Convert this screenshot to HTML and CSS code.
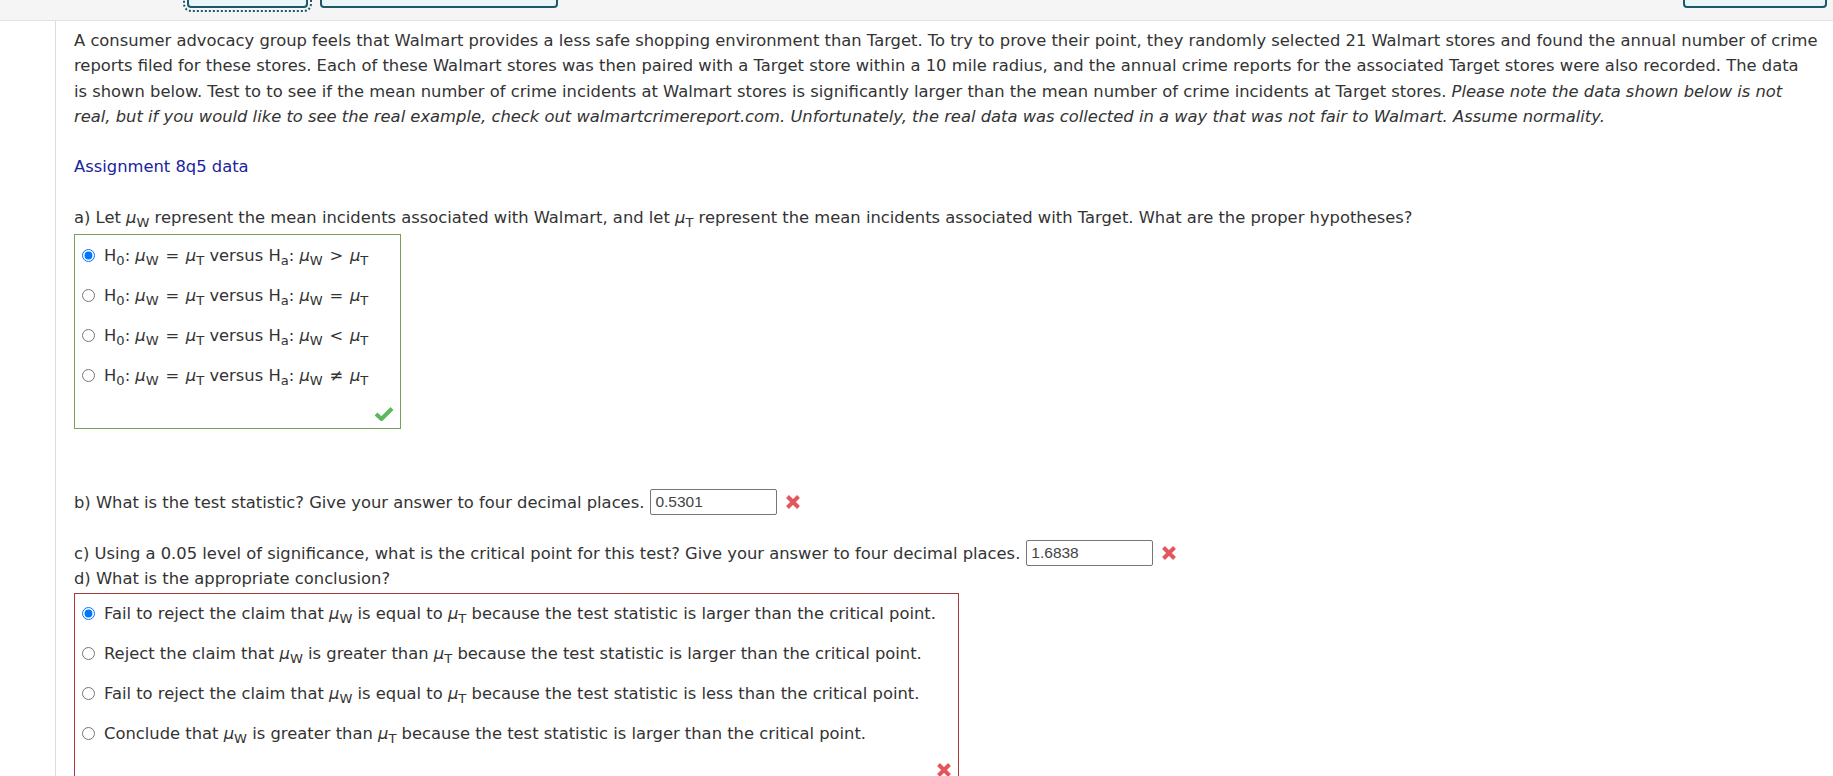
FILE: index.html
```html
<!DOCTYPE html>
<html>
<head>
    <title>Assignment 8q5</title>
    <meta charset="UTF-8">
    <meta name="viewport" content="width=device-width, initial-scale=1.0">
    <link rel="stylesheet" href="styles.css">
</head>
<body>
    <div class="topbar">
        <button class="nav-btn nav-prev" type="button" aria-label="Previous"></button>
        <button class="nav-btn nav-wide" type="button" aria-label="Jump to question"></button>
        <button class="nav-btn nav-next" type="button" aria-label="Next"></button>
    </div>

    <div class="question">
        <p class="intro">A consumer advocacy group feels that Walmart provides a less safe shopping environment than Target. To try to prove their point, they randomly selected 21 Walmart stores and found the annual number of crime reports filed for these stores. Each of these Walmart stores was then paired with a Target store within a 10 mile radius, and the annual crime reports for the associated Target stores were also recorded. The data<br>is shown below. Test to to see if the mean number of crime incidents at Walmart stores is significantly larger than the mean number of crime incidents at Target stores. <em>Please note the data shown below is not real, but if you would like to see the real example, check out walmartcrimereport.com. Unfortunately, the real data was collected in a way that was not fair to Walmart. Assume normality.</em></p>

        <p class="data-link"><a href="#">Assignment 8q5 data</a></p>

        <p class="part">a) Let <i>μ</i><sub>W</sub> represent the mean incidents associated with Walmart, and let <i>μ</i><sub>T</sub> represent the mean incidents associated with Target. What are the proper hypotheses?</p>

        <div class="choices choices-a">
            <label class="choice"><input type="radio" name="qa" checked><span>H<sub>0</sub>: <i>μ</i><sub>W</sub> <b class="op">=</b> <i>μ</i><sub>T</sub> versus H<sub>a</sub>: <i>μ</i><sub>W</sub> <b class="op">&gt;</b> <i>μ</i><sub>T</sub></span></label>
            <label class="choice"><input type="radio" name="qa"><span>H<sub>0</sub>: <i>μ</i><sub>W</sub> <b class="op">=</b> <i>μ</i><sub>T</sub> versus H<sub>a</sub>: <i>μ</i><sub>W</sub> <b class="op">=</b> <i>μ</i><sub>T</sub></span></label>
            <label class="choice"><input type="radio" name="qa"><span>H<sub>0</sub>: <i>μ</i><sub>W</sub> <b class="op">=</b> <i>μ</i><sub>T</sub> versus H<sub>a</sub>: <i>μ</i><sub>W</sub> <b class="op">&lt;</b> <i>μ</i><sub>T</sub></span></label>
            <label class="choice"><input type="radio" name="qa"><span>H<sub>0</sub>: <i>μ</i><sub>W</sub> <b class="op">=</b> <i>μ</i><sub>T</sub> versus H<sub>a</sub>: <i>μ</i><sub>W</sub> <b class="op">≠</b> <i>μ</i><sub>T</sub></span></label>
            <div class="mark">
                <svg width="20" height="15" viewBox="0 0 20 15"><path d="M2 8 L7.5 13 L18 2.5" fill="none" stroke="#5cb85c" stroke-width="4"/></svg>
            </div>
        </div>

        <div class="answer-line line-b">
            <span>b) What is the test statistic? Give your answer to four decimal places.</span>
            <input class="answer" type="text" value="0.5301">
            <svg class="wrong" width="16" height="16" viewBox="0 0 16 16"><path d="M2.5 2.5 L13.5 13.5 M13.5 2.5 L2.5 13.5" stroke="#e5565c" stroke-width="4"/></svg>
        </div>

        <div class="answer-line line-c">
            <span>c) Using a 0.05 level of significance, what is the critical point for this test? Give your answer to four decimal places.</span>
            <input class="answer" type="text" value="1.6838">
            <svg class="wrong" width="16" height="16" viewBox="0 0 16 16"><path d="M2.5 2.5 L13.5 13.5 M13.5 2.5 L2.5 13.5" stroke="#e5565c" stroke-width="4"/></svg>
        </div>
        <p class="part part-d">d) What is the appropriate conclusion?</p>

        <div class="choices choices-d">
            <label class="choice"><input type="radio" name="qd" checked><span>Fail to reject the claim that <i>μ</i><sub>W</sub> is equal to <i>μ</i><sub>T</sub> because the test statistic is larger than the critical point.</span></label>
            <label class="choice"><input type="radio" name="qd"><span>Reject the claim that <i>μ</i><sub>W</sub> is greater than <i>μ</i><sub>T</sub> because the test statistic is larger than the critical point.</span></label>
            <label class="choice"><input type="radio" name="qd"><span>Fail to reject the claim that <i>μ</i><sub>W</sub> is equal to <i>μ</i><sub>T</sub> because the test statistic is less than the critical point.</span></label>
            <label class="choice"><input type="radio" name="qd"><span>Conclude that <i>μ</i><sub>W</sub> is greater than <i>μ</i><sub>T</sub> because the test statistic is larger than the critical point.</span></label>
            <div class="mark">
                <svg width="16" height="16" viewBox="0 0 16 16"><path d="M2.5 2.5 L13.5 13.5 M13.5 2.5 L2.5 13.5" stroke="#e5565c" stroke-width="4"/></svg>
            </div>
        </div>
    </div>
</body>
</html>
```

FILE: styles.css
```css
body {
    margin: 0;
    font-family: "DejaVu Sans", Verdana, sans-serif;
    font-size: 16.35px;
    line-height: 25.3px;
    color: #333;
    background: #fff;
}
.topbar {
    box-sizing: border-box;
    height: 21px;
    overflow: hidden;
    display: flex;
    align-items: flex-end;
    padding: 0 6px 12px 187px;
    background: #f5f5f5;
    border-bottom: 1px solid #e2e2e2;
}
.nav-btn {
    height: 32px;
    flex: none;
    background: #eaf5fa;
    border: 2px solid #1d5868;
    border-radius: 4px;
}
.nav-prev {
    width: 121px;
    outline: 2px dotted #1d5868;
    outline-offset: 2px;
}
.nav-wide {
    width: 238px;
    margin-left: 12px;
}
.nav-next {
    width: 144px;
    margin-left: auto;
}
.question {
    box-sizing: border-box;
    min-height: calc(100vh - 21px);
    margin-left: 55px;
    padding: 7px 12px 0 18px;
    border-left: 1px solid #dcdcdc;
}
p {
    margin: 0;
}
.data-link,
.part {
    margin-top: 25.3px;
}
.data-link a {
    color: #1a23a0;
    text-decoration: none;
}
sub {
    font-size: 0.8em;
    line-height: 0;
    vertical-align: -0.3em;
}
.op {
    font-weight: normal;
    margin: 0 1.5px;
}
.choices {
    box-sizing: border-box;
    display: flex;
    flex-direction: column;
}
.choices-a {
    width: 327px;
    margin-top: 4px;
    border: 1px solid #79a15a;
}
.choices-d {
    width: 885px;
    margin-top: 1px;
    height: 200px;
    border: 1px solid #a83a3a;
    border-bottom: none;
}
.choice {
    flex: none;
    display: flex;
    align-items: center;
    height: 40px;
    padding-left: 7px;
    white-space: nowrap;
}
.choice input {
    width: 13px;
    height: 13px;
    margin: 0 9px 0 0;
}
.mark {
    flex: none;
    box-sizing: border-box;
    display: flex;
    justify-content: flex-end;
    align-items: flex-end;
    height: 33px;
    padding: 0 6px 7px 0;
}
.choices-d .mark {
    align-items: flex-start;
    padding-top: 8px;
}
.answer-line {
    display: flex;
    align-items: center;
    height: 26px;
}
.line-b {
    margin-top: 60px;
}
.line-c {
    margin-top: 25px;
}
.part-d {
    margin-top: 0;
}
.answer {
    box-sizing: border-box;
    width: 127px;
    height: 26px;
    margin-left: 6px;
    padding: 0 4px;
    border: 1px solid #767676;
    border-radius: 2px;
    font-family: "Liberation Sans", Arial, sans-serif;
    font-size: 15.5px;
    color: #444;
}
.wrong {
    margin-left: 8px;
}
```
